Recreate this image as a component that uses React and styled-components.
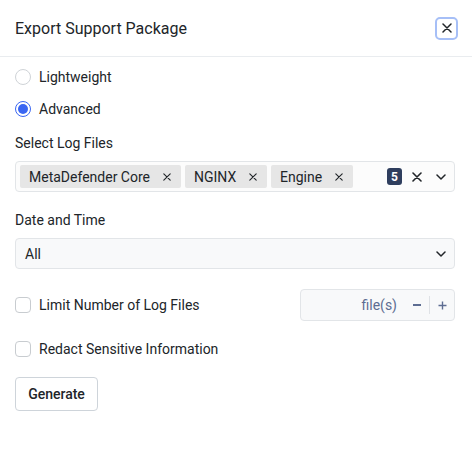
import styled, { createGlobalStyle } from "styled-components";

const GlobalStyle = createGlobalStyle`
  body {
    margin: 0;
    background: #ffffff;
    font-family: Roboto, "Liberation Sans", Arial, sans-serif;
    color: #212529;
  }
`;

const Modal = styled.div`
  width: 472px;
  height: 454px;
  background: #fff;
`;

const Header = styled.div`
  height: 56px;
  display: flex;
  align-items: center;
  justify-content: space-between;
  padding: 0 14px 0 15px;
  border-bottom: 1px solid #e9ecef;
`;

const Title = styled.h5`
  margin: 0;
  font-size: 16px;
  font-weight: 400;
  color: #212529;
`;

const CloseButton = styled.button`
  width: 23px;
  height: 23px;
  padding: 0;
  display: flex;
  align-items: center;
  justify-content: center;
  background: #fff;
  border: 2px solid #a6bff7;
  border-radius: 5px;
  color: #212529;
  cursor: pointer;
`;

const Body = styled.div`
  padding: 8px 17px 0 15px;
  display: flex;
  flex-direction: column;
`;

const OptionRow = styled.label`
  display: flex;
  align-items: center;
  gap: 8px;
  height: 24px;
  margin-top: ${({ $top }) => $top || 0}px;
  font-size: 14px;
  color: #212529;
`;

const Radio = styled.span`
  width: 16px;
  height: 16px;
  box-sizing: border-box;
  border-radius: 50%;
  border: 1px solid ${({ $checked }) => ($checked ? "#3a66f2" : "#cfd3d7")};
  display: flex;
  align-items: center;
  justify-content: center;
  &::after {
    content: "";
    width: 10px;
    height: 10px;
    border-radius: 50%;
    background: ${({ $checked }) => ($checked ? "#3a66f2" : "transparent")};
  }
`;

const Checkbox = styled.span`
  width: 16px;
  height: 16px;
  box-sizing: border-box;
  border-radius: 4px;
  border: 1px solid #c8ccd0;
  flex-shrink: 0;
`;

const FieldLabel = styled.div`
  font-size: 14px;
  line-height: 21px;
  margin-top: ${({ $top }) => $top}px;
  margin-bottom: 7px;
`;

const SelectBox = styled.div`
  height: 31px;
  box-sizing: border-box;
  border: 1px solid #e2e5e8;
  border-radius: 4px;
  background: ${({ $bg }) => $bg || "#fcfcfc"};
  display: flex;
  align-items: center;
  padding: 0 8px 0 4px;
  font-size: 14px;
`;

const Chips = styled.div`
  display: flex;
  gap: 4px;
  flex: 1;
`;

const Chip = styled.span`
  height: 23px;
  box-sizing: border-box;
  width: ${({ $w }) => $w}px;
  background: #e6e6e6;
  border-radius: 2px;
  display: flex;
  align-items: center;
  justify-content: space-between;
  padding: 0 10px 0 9px;
  font-size: 14px;
  color: #212529;
`;

const Badge = styled.span`
  width: 15px;
  height: 17px;
  border-radius: 3px;
  background: #2f3e5e;
  color: #fff;
  font-size: 12px;
  font-weight: 700;
  display: flex;
  align-items: center;
  justify-content: center;
  margin-right: 10px;
`;

const Value = styled.span`
  flex: 1;
  padding-left: 5px;
`;

const IconSlot = styled.span`
  display: flex;
  align-items: center;
  margin-left: ${({ $left }) => $left || 0}px;
`;

const LimitRow = styled.div`
  display: flex;
  align-items: center;
  justify-content: space-between;
  margin-top: 20px;
`;

const NumberInput = styled.div`
  width: 155px;
  height: 32px;
  box-sizing: border-box;
  border: 1px solid #e2e5e8;
  border-radius: 4px;
  background: #f8f9fa;
  display: flex;
  align-items: center;
  justify-content: flex-end;
  font-size: 14px;
`;

const Unit = styled.span`
  color: #5d6d92;
  margin-right: 8px;
`;

const StepButton = styled.span`
  width: 24px;
  height: 18px;
  display: flex;
  align-items: center;
  justify-content: center;
  color: #5d6d92;
  border-left: ${({ $divided }) => ($divided ? "1px solid #dfe2e6" : "none")};
`;

const GenerateButton = styled.button`
  align-self: flex-start;
  margin-top: 16px;
  height: 34px;
  width: 83px;
  background: #fff;
  border: 1px solid #ced4da;
  border-radius: 4px;
  font-family: inherit;
  font-size: 14px;
  font-weight: 500;
  color: #212529;
`;

const Cross = ({ size = 8, width = 1.6 }) => (
  <svg width={size} height={size} viewBox="0 0 10 10" fill="none">
    <path d="M1 1L9 9M9 1L1 9" stroke="currentColor" strokeWidth={width} strokeLinecap="round" />
  </svg>
);

const Chevron = () => (
  <svg width="10" height="6" viewBox="0 0 10 6" fill="none">
    <path d="M1 1L5 5L9 1" stroke="#212529" strokeWidth="1.5" strokeLinecap="round" strokeLinejoin="round" />
  </svg>
);

const logFiles = [
  { name: "MetaDefender Core", width: 161 },
  { name: "NGINX", width: 82 },
  { name: "Engine", width: 82 },
];

const App = () => {
  return (
    <Modal>
      <GlobalStyle />
      <Header>
        <Title>Export Support Package</Title>
        <CloseButton aria-label="Close">
          <Cross size={10} width={1.5} />
        </CloseButton>
      </Header>
      <Body>
        <OptionRow>
          <Radio />
          Lightweight
        </OptionRow>
        <OptionRow $top={8}>
          <Radio $checked />
          Advanced
        </OptionRow>

        <FieldLabel $top={12}>Select Log Files</FieldLabel>
        <SelectBox>
          <Chips>
            {logFiles.map((file) => (
              <Chip key={file.name} $w={file.width}>
                {file.name}
                <Cross size={8} width={1.4} />
              </Chip>
            ))}
          </Chips>
          <Badge>5</Badge>
          <Cross size={10} width={1.6} />
          <IconSlot $left={14}>
            <Chevron />
          </IconSlot>
        </SelectBox>

        <FieldLabel $top={18}>Date and Time</FieldLabel>
        <SelectBox $bg="#f8f9fa">
          <Value>All</Value>
          <Chevron />
        </SelectBox>

        <LimitRow>
          <OptionRow>
            <Checkbox />
            Limit Number of Log Files
          </OptionRow>
          <NumberInput>
            <Unit>file(s)</Unit>
            <StepButton>
              <svg width="8" height="2" viewBox="0 0 8 2">
                <rect width="8" height="2" fill="currentColor" />
              </svg>
            </StepButton>
            <StepButton $divided>
              <svg width="9" height="9" viewBox="0 0 9 9">
                <path d="M4.5 0.5V8.5M0.5 4.5H8.5" stroke="currentColor" strokeWidth="1.4" />
              </svg>
            </StepButton>
          </NumberInput>
        </LimitRow>

        <OptionRow $top={16}>
          <Checkbox />
          Redact Sensitive Information
        </OptionRow>

        <GenerateButton>Generate</GenerateButton>
      </Body>
    </Modal>
  );
};

export default App;
